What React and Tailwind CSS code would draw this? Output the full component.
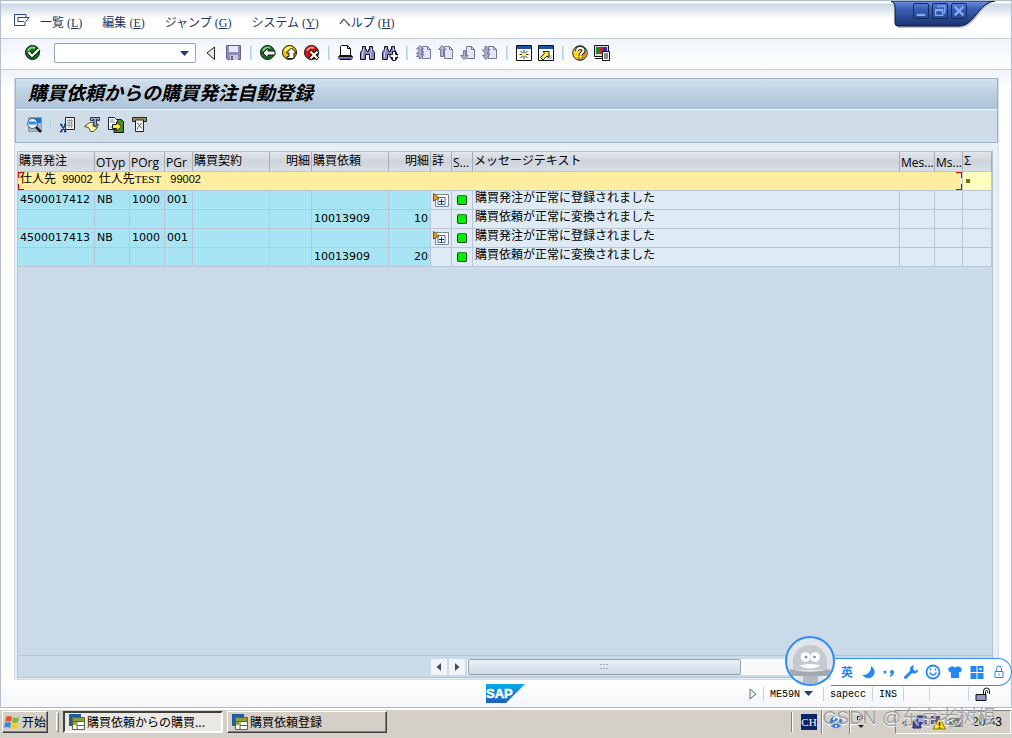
import React, { useState } from 'react';

const menus = [
  { label: '一覧', hot: 'L' },
  { label: '編集', hot: 'E' },
  { label: 'ジャンプ', hot: 'G' },
  { label: 'システム', hot: 'Y' },
  { label: 'ヘルプ', hot: 'H' },
];

const columns = [
  { label: '購買発注', width: 'w-[77px]' },
  { label: 'OTyp', width: 'w-[35px]', latin: true },
  { label: 'POrg', width: 'w-[35px]', latin: true },
  { label: 'PGr', width: 'w-[28px]', latin: true },
  { label: '購買契約', width: 'w-[77px]' },
  { label: '明細', width: 'w-[42px]', right: true },
  { label: '購買依頼', width: 'w-[77px]' },
  { label: '明細', width: 'w-[42px]', right: true },
  { label: '詳', width: 'w-[21px]' },
  { label: 'S...', width: 'w-[21px]', latin: true },
  { label: 'メッセージテキスト', width: '' },
  { label: 'Mes...', width: 'w-[35px]', latin: true },
  { label: 'Ms...', width: 'w-[28px]', latin: true },
  { label: 'Σ', width: 'w-[29px]' },
];

const rows = [
  { po: '4500017412', type: 'NB', org: '1000', grp: '001', req: '', item: '', text: '購買発注が正常に登録されました' },
  { po: '', type: '', org: '', grp: '', req: '10013909', item: '10', text: '購買依頼が正常に変換されました' },
  { po: '4500017413', type: 'NB', org: '1000', grp: '001', req: '', item: '', text: '購買発注が正常に登録されました' },
  { po: '', type: '', org: '', grp: '', req: '10013909', item: '20', text: '購買依頼が正常に変換されました' },
];

const Svg = ({ children, className = 'w-4 h-4' }) => (
  <svg viewBox="0 0 16 16" className={className + ' block shrink-0'} fill="none" aria-hidden="true">{children}</svg>
);

const Ball = ({ fill, shine, children }) => (
  <Svg>
    <circle cx="7.5" cy="7.5" r="7" fill={fill} stroke="#111" />
    <path d="M3 6a5 5 0 0 1 7-3" stroke={shine} strokeWidth="2" />
    {children}
  </Svg>
);

const Page = ({ children }) => (
  <Svg>
    <path d="M6.500 1.500h5l3 3v9h-8z" fill="#e4e4fa" stroke="#77779a" />
    <path d="M11.500 1.500v3h3" stroke="#77779a" />
    {children}
  </Svg>
);

const Binoculars = ({ children }) => (
  <Svg>
    <path d="M2.500 1.500h3v3h1v2h2v-2h1v-3h3v3l2 3v7h-5v-5h-4v5h-5v-7l2-3z" fill="#8688c4" stroke="#14142c" />
    <path d="M3.500 3v3l-1 2v5M11.500 3v3l-1 2v5" stroke="#c9caee" />
    {children}
  </Svg>
);

const icons = {
  ok: <Ball fill="#0c7a1c" shine="#7fd67f"><path d="M3.500 7l3.500 4 7-7" stroke="#111" strokeWidth="4" /><path d="M3.500 7l3.500 4 7-7" stroke="#fff" strokeWidth="2.200" /></Ball>,
  tri: <Svg><path d="M10.500 2v12.500L3 8z" fill="#e4e6e8" stroke="#222" /></Svg>,
  save: <Svg><path d="M.5.5h14v14h-13l-1-1z" fill="#8e8ebc" stroke="#63638c" /><path d="M3 1h9v6H3z" fill="#e8e8fc" /><path d="M4 10h8v5H4z" fill="#c8c8e0" /><path d="M5 11h2v4H5z" fill="#63638c" /></Svg>,
  back: <Ball fill="#0c7a1c" shine="#7fd67f"><path d="M3 8l5-5v3h7v4H8v3z" fill="#fff" stroke="#111" /></Ball>,
  up: <Ball fill="#f5c400" shine="#fff58a"><path d="M9.500 3l5 5h-2.500v5.500h-7v-2H7V8H4.500z" fill="#fff" stroke="#111" /></Ball>,
  cancel: <Ball fill="#cf1212" shine="#ff8a8a"><path d="M6 6l8 8m0-8l-8 8" stroke="#111" strokeWidth="4" /><path d="M6.500 6.500l7 7m0-7l-7 7" stroke="#fff" strokeWidth="2" /></Ball>,
  print: <Svg><path d="M2.500 10.500v-9l1-1h6l3 3v7" fill="#fff" stroke="#111" /><path d="M9.500 1v2.500h3" stroke="#111" /><path d="M1.500 10.500h12l1 1h-14z" fill="#fff" stroke="#111" /><path d="M1 12.500h13" stroke="#7b7fc0" /><path d="M.5 11.500v2h14v-2" stroke="#5b5f9c" /><path d="M1.500 14.500h12" stroke="#111" /></Svg>,
  find: <Binoculars />,
  findNext: <Binoculars><path d="M10.500 6.500h3v3h2.500v3h-2.500v3h-3v-3H8v-3h2.500z" fill="#fff" stroke="#14142c" /></Binoculars>,
  first: <Page><path d="M4 .5l3.500 3.500H5.500v3H8L4.500 9.500H8l-3 3v1H3v-2H.5L3 8.500H.5L3 6V4H.5z" fill="#b2b2d4" stroke="#77779a" /></Page>,
  prev: <Page><path d="M4 .5l4 4H5.500v7h-3v-7H.5z" fill="#b2b2d4" stroke="#77779a" /></Page>,
  next: <Page><path d="M4 14.500l4-4H5.500v-5h-2v5H.5z" fill="#b2b2d4" stroke="#77779a" /></Page>,
  last: <Page><path d="M3 1.500h2v3h3L5.500 7v2H8l-4 5.500-3.500-4H3V8L.5 5H3z" fill="#b2b2d4" stroke="#77779a" /></Page>,
  session: <Svg><path d="M.5.5h15v15H.5z" fill="#fff" stroke="#111" /><path d="M1 1h14v3H1z" fill="#1c50a4" /><path d="M8 5v9M3.500 9.500h9M4.500 6l7 7m0-7l-7 7" stroke="#333" /><path d="M6 8h4v3H6z" fill="#ffe94a" /></Svg>,
  shortcut: <Svg><path d="M.5.5h15v15H.5z" fill="#fff" stroke="#111" /><path d="M1 1h14v3H1z" fill="#1c50a4" /><path d="M9 10h5v4H9z" fill="#c9ced8" /><path d="M2.500 12.500l4-4-1.500-2h6v6l-2-1.500-4 4z" fill="#ffe94a" stroke="#222" /></Svg>,
  help: <Svg><circle cx="8" cy="8" r="7.300" fill="#ffd51f" stroke="#222" /><path d="M8 1a7 7 0 0 1 3 13z" fill="#f08a18" /><path d="M5 6c0-4 6.500-4 6.500-.5C11.500 8 8.500 8 8.500 10.500M8.500 12v2.500" stroke="#222" strokeWidth="4" /><path d="M5 6c0-4 6.500-4 6.500-.5C11.500 8 8.500 8 8.500 10.500M8.500 12v2" stroke="#fff" strokeWidth="2" /></Svg>,
  monitor: <Svg><path d="M.5.5h14v11H.5z" fill="#ddd" stroke="#111" /><path d="M2 2h4v7H2z" fill="#138a2c" /><path d="M6 2h3v7H6z" fill="#d81a1a" /><path d="M9 2h4v7H9z" fill="#2430d0" /><path d="M1 13.500h7" stroke="#111" /><path d="M8.500 6.500h7v9h-7z" fill="#fff" stroke="#111" /><path d="M10 9h4M10 11h4M10 13h4" stroke="#111" /></Svg>,
  detail: <Svg><path d="M2.500.5h13v14h-13z" fill="#a9b7c8" stroke="#8b99aa" /><path d="M6 1h9v5H6z" fill="#1676cf" /><circle cx="6.500" cy="6.500" r="5" fill="#e4f2fd" stroke="#4a5c74" /><path d="M2.500 4.500h8v3h-8z" fill="#2f8de0" /><path d="M10 10l5 5" stroke="#222" strokeWidth="2.500" /></Svg>,
  excel: <Svg><path d="M5.500.5h9v12h-9z" fill="#f3f3f3" stroke="#222" /><path d="M7 3.500h6M7 6h6M7 8.500h6M9 2v9M11.500 2v9" stroke="#999" /><path d="M0 7.500h2.500M4 7.500h2.500M0 14.500h2.500M4 14.500h2.500M1 8l4.500 6M5.500 8L1 14" stroke="#173f78" strokeWidth="1.300" /></Svg>,
  layout: <Svg><path d="M.5 9.500l5-4h4l1 4 3 1-4 4h-3l-2-4z" fill="#fff3ae" stroke="#5c4a17" /><path d="M6.500.5h9v3h-2v-1h-1v5h1.500v1.500h-5V7.500h1v-5h-1v1h-2.500z" fill="#89b4e8" stroke="#111" strokeWidth=".8" /></Svg>,
  exportTo: <Svg><path d="M6 2.500h7l2.500 2v11H6z" fill="#4c8d2e" stroke="#111" /><path d="M.5.5h6l3 3v9h-9z" fill="#fff" stroke="#222" /><path d="M2 3h4M2 5h5M2 10h3" stroke="#6d87b8" /><path d="M4.500 7.500h4v-2.500l5 4.500-5 4.500v-2.500h-4z" fill="#ffee2e" stroke="#222" /></Svg>,
  filter: <Svg><path d="M.5.5h14v4H.5z" fill="#a78b57" stroke="#222" /><path d="M3.500 3v11.500h8V3z" fill="#fff" stroke="#222" /><path d="M5 5.500l5 6M10 5.500l-4 5-1 2" stroke="#555" /></Svg>,
};

const ToolButton = ({ icon, label }) => (
  <button type="button" aria-label={label} className="shrink-0">{icons[icon]}</button>
);

const Sep = ({ className = 'mx-0.5' }) => (
  <span className={'w-0.5 h-3.5 shrink-0 bg-[#b9cfe3] border-r border-[#d3e1ee] ' + className} />
);

function WindowControls() {
  return (
    <div className="absolute top-0 right-3.5 w-[106px] h-7">
      <svg viewBox="0 0 106 28" className="absolute inset-0 w-full h-full" aria-hidden="true">
        <defs>
          <linearGradient id="tab" x1="0" y1="0" x2="0" y2="1">
            <stop offset="0" stopColor="#6d92e4" />
            <stop offset=".3" stopColor="#3b62b8" />
            <stop offset="1" stopColor="#1b3270" />
          </linearGradient>
        </defs>
        <path d="M0 0Q5 1 5 6v17q0 4 4 4h60c12 0 18-15 26-22q5-4 10-5z" fill="#8c93a3" opacity=".6" />
        <path d="M0 0Q4 1 4 6v16q0 3 3 3h61c12 0 18-15 26-21q5-4 10-4z" fill="url(#tab)" stroke="#0c1430" />
      </svg>
      <div className="relative flex gap-[3px] pl-[22px] pt-[2px]">
        <button type="button" aria-label="最小化" className="w-4 h-4 border border-[#14295e] rounded-xs">
          <Svg className="w-3.5 h-3.5"><path d="M3 12.500h10" stroke="#86aaf8" strokeWidth="2.500" /></Svg>
        </button>
        <button type="button" aria-label="元に戻す" className="w-4 h-4 border border-[#14295e] rounded-xs">
          <Svg className="w-3.5 h-3.5"><path d="M6 4V2.500h7.500V10H12M3 6.500h8V13H3zM3 7.500h8" stroke="#86aaf8" strokeWidth="1.500" /></Svg>
        </button>
        <button type="button" aria-label="閉じる" className="w-4 h-4 border border-[#14295e] rounded-xs">
          <Svg className="w-3.5 h-3.5"><path d="M3 3l10 10M13 3L3 13" stroke="#86aaf8" strokeWidth="2.500" /></Svg>
        </button>
      </div>
    </div>
  );
}

function MenuBar() {
  return (
    <header className="relative h-[39px] border-t border-b border-t-[#aebccd] border-b-[#c2cad6] bg-[linear-gradient(to_bottom,#ffffff_2px,#cbd7e5_3px,#ffffff_18px)]">
      <nav className="flex items-center gap-5 h-full pl-[13px] pt-1.5 text-xs text-[#1c3464]">
        <svg viewBox="0 0 16 12" className="w-4 h-3 -mr-2.5 mb-1.5" fill="none" stroke="#28457c" aria-hidden="true">
          <path d="M12 3V.5H.5v11H11V8M4 3.500h7.500M4 7.500h6M4 3v5M11 3.500h4L11.500 8" />
        </svg>
        {menus.map((m) => (
          <button type="button" key={m.hot} className="leading-4 whitespace-nowrap">
            {m.label}<span className="font-['Liberation_Serif',serif]"> (<u>{m.hot}</u>)</span>
          </button>
        ))}
      </nav>
      <WindowControls />
    </header>
  );
}

function MainToolbar() {
  const [command, setCommand] = useState('');
  return (
    <div className="flex items-center gap-1.5 h-[31px] pl-6 pb-0.5 border-b border-[#c9ced8] bg-linear-to-b from-[#f0f4f9] to-white">
      <ToolButton icon="ok" label="確定" />
      <div className="flex items-center w-[142px] h-5 ml-[7px] mr-0.5 border border-[#9aa2aa] rounded-xs bg-white">
        <input aria-label="コマンド" value={command} onChange={(e) => setCommand(e.target.value)} className="min-w-0 flex-1 px-1 text-xs outline-none" />
        <button type="button" aria-label="履歴" className="px-1.5">
          <svg viewBox="0 0 9 5" className="w-[9px] h-[5px]" aria-hidden="true"><path d="M0 0h9L4.500 5z" fill="#1f3c74" /></svg>
        </button>
      </div>
      <ToolButton icon="tri" label="隠す" />
      <ToolButton icon="save" label="保存" />
      <Sep />
      <ToolButton icon="back" label="戻る" />
      <ToolButton icon="up" label="終了" />
      <ToolButton icon="cancel" label="中止" />
      <Sep />
      <ToolButton icon="print" label="印刷" />
      <ToolButton icon="find" label="検索" />
      <ToolButton icon="findNext" label="次を検索" />
      <Sep />
      <ToolButton icon="first" label="先頭ページ" />
      <ToolButton icon="prev" label="前ページ" />
      <ToolButton icon="next" label="次ページ" />
      <ToolButton icon="last" label="最終ページ" />
      <Sep />
      <ToolButton icon="session" label="新規セッション" />
      <ToolButton icon="shortcut" label="ショートカット" />
      <Sep />
      <ToolButton icon="help" label="ヘルプ" />
      <ToolButton icon="monitor" label="レイアウト" />
    </div>
  );
}

const Lamp = () => (
  <span className="block w-2.5 h-2.5 mx-auto rounded-xs bg-[#00f000] border border-[#123c12] border-t-[#2f7d2f]" />
);

const Expand = () => (
  <button type="button" aria-label="詳細" className="block mx-auto">
    <svg viewBox="0 0 16 15" className="w-4 h-[15px]" fill="none" aria-hidden="true">
      <path d="M2.500 1.500h13v12h-13z" fill="#fff" stroke="#7f858d" />
      <path d="M5 4.500h7v7H5z" stroke="#3868b8" />
      <path d="M8.500 6v5M6 8.500h5" stroke="#1c1ca4" />
      <path d="M.5.5L6 5 .5 8z" fill="#f59a14" stroke="#4c3c14" strokeWidth=".8" />
    </svg>
  </button>
);

const keyCell = 'border-r border-b border-[#bac6d6] bg-[#a7e5f4] px-0.5 pt-0 pb-px';
const plainCell = 'border-r border-b border-[#bac6d6] bg-[#deebf5] px-0.5 py-0';

function ResultTable() {
  return (
    <table className="w-full table-fixed border-separate border-spacing-0 text-xs">
      <thead>
        <tr className="h-5">
          {columns.map((c, i) => (
            <th
              key={i}
              className={`${c.width} ${c.right ? 'text-right' : 'text-left'} h-5 overflow-hidden whitespace-nowrap px-px py-0 font-normal leading-4 border-r border-b border-r-[#a4aebb] border-b-[#bac6d6] bg-linear-to-b from-[#e3e7eb] via-[#cfd3db] to-[#d8e0e6] ${c.latin ? "align-bottom font-['Open_Sans',sans-serif]" : 'align-top'}`}
            >
              {c.label}
            </th>
          ))}
        </tr>
      </thead>
      <tbody>
        <tr className="h-[19px]">
          <td colSpan={13} className="relative h-[19px] bg-[#ffeea0] border-b border-r border-[#bac6d6] px-0.5 py-0 align-top leading-3 whitespace-pre">
            仕人先<span className="font-['Liberation_Sans',sans-serif] text-[11px]">  99002  </span>仕人先<span className="font-['Liberation_Serif',serif] text-[11px]">TEST</span><span className="font-['Liberation_Sans',sans-serif] text-[11px]">   99002</span>
            <i className="absolute left-0 top-0 w-1.5 h-1.5 border-l border-t border-[#e00000]" />
            <i className="absolute left-0 bottom-0 w-1.5 h-1.5 border-l border-b border-[#e00000]" />
            <i className="absolute right-0 top-0 w-1.5 h-1.5 border-r border-t border-[#e00000]" />
            <i className="absolute right-0 bottom-0 w-1.5 h-1.5 border-r border-b border-[#e00000]" />
          </td>
          <td className="bg-[#ffffc0] border-b border-r border-[#bac6d6] py-0 px-[3px]"><span className="block w-1 h-1 bg-[#7d7200]" /></td>
        </tr>
        {rows.map((r, i) => (
          <tr key={i} className="h-[19px] leading-4 font-['DejaVu_Sans',sans-serif] text-[11px]">
            <td className={keyCell}>{r.po}</td>
            <td className={keyCell}>{r.type}</td>
            <td className={keyCell}>{r.org}</td>
            <td className={keyCell}>{r.grp}</td>
            <td className={keyCell} />
            <td className={keyCell} />
            <td className={keyCell}>{r.req}</td>
            <td className={keyCell + ' text-right'}>{r.item}</td>
            <td className={plainCell}>{r.po && <Expand />}</td>
            <td className={plainCell}><Lamp /></td>
            <td className={plainCell + " align-top text-xs leading-3 font-['Noto_Sans_CJK_JP',sans-serif]"}>{r.text}</td>
            <td className={plainCell} />
            <td className={plainCell} />
            <td className={plainCell} />
          </tr>
        ))}
      </tbody>
    </table>
  );
}

function ScrollBar() {
  return (
    <div className="flex items-center h-[22px] border-t border-[#b5c5d5]">
      <div className="w-[42.4%]" />
      <button type="button" aria-label="左へ" className="w-4 h-4 mr-0.5 bg-[#f1f5f9]"><Svg><path d="M10 4v8L5.500 8z" fill="#3c5264" /></Svg></button>
      <button type="button" aria-label="右へ" className="w-4 h-4 mr-0.5 bg-[#f1f5f9]"><Svg><path d="M6 4v8l4.500-4z" fill="#3c5264" /></Svg></button>
      <div className="flex-1 h-4 bg-[#f8fafc]">
        <div className="w-[52%] h-4 mx-px flex items-center justify-center rounded-xs border border-[#96a4b0] bg-linear-to-b from-[#eaf1f7] to-[#cddae6]">
          <svg viewBox="0 0 9 5" className="w-[9px] h-[5px]" fill="#9dabb8" aria-hidden="true">
            <path d="M0 0h2v1H0zM3 0h2v1H3zM6 0h2v1H6zM0 4h2v1H0zM3 4h2v1H3zM6 4h2v1H6z" />
          </svg>
        </div>
      </div>
    </div>
  );
}

function StatusBar() {
  return (
    <footer className="grid grid-cols-[1fr_auto_1fr] items-center h-7 border-b border-[#aeb8c5] bg-linear-to-b from-white to-[#f4f6f9]">
      <span />
      <svg viewBox="0 0 40 20" className="w-10 h-5" role="img" aria-label="SAP">
        <defs>
          <linearGradient id="sap" x1="0" y1="0" x2="0" y2="1">
            <stop offset="0" stopColor="#06aeea" />
            <stop offset="1" stopColor="#1d5fbe" />
          </linearGradient>
        </defs>
        <path d="M0 0h39L20 19H0z" fill="url(#sap)" />
        <text x="0" y="14" fontSize="13" fontWeight="bold" fill="#fff" stroke="#fff" strokeWidth=".4" fontFamily="Liberation Sans">SAP</text>
      </svg>
      <div className="flex items-center justify-end h-full pr-5 text-[10px] font-medium font-['Liberation_Mono',monospace]">
        <svg viewBox="0 0 8 12" className="w-2 h-3 mr-1.5" aria-hidden="true"><path d="M1 1v10l6-5z" fill="#eef3f8" stroke="#4f6c86" /></svg>
        <span className="h-3.5 border-l border-[#ccd2da] pl-1.5">ME59N</span>
        <svg viewBox="0 0 9 5" className="w-[9px] h-[5px] mx-1" aria-hidden="true"><path d="M0 0h9L4.500 5z" fill="#26406c" /></svg>
        <span className="h-3.5 border-l border-[#ccd2da] ml-1.5 px-1.5">sapecc</span>
        <span className="w-[31px] h-3.5 border-l border-[#ccd2da] pl-1.5">INS</span>
        <span className="w-[26px] h-3.5 border-l border-[#ccd2da]" />
        <span className="w-[39px] h-3.5 border-l border-[#ccd2da]" />
        <span className="h-3.5 border-l border-[#ccd2da] pl-1.5" />
        <Svg><path d="M1 8.500h10v6H1z" fill="#9296c8" stroke="#111" /><path d="M8.500 8V5a3 3 0 0 1 6 0v3M10.500 8V5.500a1 1 0 0 1 2 0V7" stroke="#111" /></Svg>
      </div>
    </footer>
  );
}

function InputBar() {
  return (
    <div className="absolute right-0 bottom-[52px] flex items-end">
      <svg viewBox="0 0 50 50" className="relative z-10 w-[50px] h-[50px] -mr-1" aria-hidden="true">
        <defs><clipPath id="face"><circle cx="25" cy="25" r="23" /></clipPath></defs>
        <circle cx="25" cy="25" r="24" fill="#e1e4e8" stroke="#2f8df5" strokeWidth="2" />
        <g clipPath="url(#face)">
          <path d="M8 34V26a17 17 0 0 1 34 0v8z" fill="#c5cad1" />
          <path d="M5 33q20 6 40 0v7H5z" fill="#a3a9b2" />
          <path d="M18 40h15v10H18z" fill="#b5bac2" />
          <path d="M6 40h6v6zM37 40h6v6z" fill="#fff" />
        </g>
        <circle cx="20.500" cy="21" r="4.800" fill="#fff" />
        <circle cx="30" cy="21" r="4.800" fill="#fff" />
        <circle cx="21" cy="21" r="1.500" fill="#8b919a" />
        <path d="M28 20l3 1-3 1" stroke="#8b919a" fill="none" />
        <path d="M14 29.500q11-3 22 0-11 6-22 0z" fill="#fff" />
      </svg>
      <div className="flex items-center gap-1.5 h-7 pl-2.5 pr-1 rounded-r-full border border-l-0 border-[#2f8df5] bg-white text-[#2288f8]">
        <span className="text-xs font-bold leading-none">英</span>
        <Svg><path d="M10 2a6.500 6.500 0 1 1-8.500 9A8 8 0 0 0 10 2z" fill="currentColor" transform="translate(2 0)" /></Svg>
        <Svg><circle cx="4" cy="8" r="1.500" fill="currentColor" /><circle cx="11" cy="8" r="2" fill="currentColor" /><path d="M12 8q0 3-3 4" stroke="currentColor" strokeWidth="1.500" /></Svg>
        <Svg><path d="M2.500 13.500l7-7" stroke="currentColor" strokeWidth="3" strokeLinecap="round" /><path d="M11 1.500a4 4 0 1 0 4 4l-3 1.500-2-2z" fill="currentColor" /></Svg>
        <Svg><circle cx="8" cy="8" r="6.500" stroke="currentColor" strokeWidth="1.800" /><path d="M4.500 8.500q3.500 5 7 0" stroke="currentColor" strokeWidth="1.500" /><path d="M5.500 4.500v2M10.500 4.500v2" stroke="currentColor" strokeWidth="1.500" /></Svg>
        <Svg><path d="M5 2q3 2.500 6 0l4 2.500-1.500 4-1.500-.5v6H4v-6l-1.500.5L1 4.500z" fill="currentColor" /></Svg>
        <Svg><path d="M1.500 2h6v6h-6zM1.500 9h6v6h-6zM8.500 9h6v6h-6z" fill="currentColor" /><path d="M9.500 3h4v4h-4z" stroke="currentColor" strokeWidth="2" /></Svg>
        <Svg><path d="M4 7.500h8v6H4zM5.500 7V4.500a2.500 2.500 0 0 1 5 0V7M8 9.500v2" stroke="currentColor" /></Svg>
      </div>
    </div>
  );
}

const TaskIcon = () => (
  <Svg>
    <path d="M0 0h12v3H3v9H0z" fill="#1f5d9e" />
    <path d="M3.500 3.500h12v12h-12z" fill="#fff" stroke="#5c6c1c" />
    <path d="M4 4h11v3H4zM4 7h3v4H4z" fill="#8da03a" />
    <path d="M4 7.500h11M8 8v7M8 11.500h7" stroke="#5c6c1c" />
  </Svg>
);

function TaskBar() {
  return (
    <div className="relative flex items-center h-[30px] pb-1 pl-0.5 pr-px border-t-2 border-white bg-[#d4d0c8] text-xs font-['Noto_Sans_CJK_JP',sans-serif]">
      <button type="button" className="flex items-center gap-0.5 h-[22px] px-px border border-t-white border-l-white border-r-[#404040] border-b-[#404040] shadow-[inset_-1px_-1px_0_#808080] leading-4 whitespace-nowrap">
        <Svg><path d="M2 3q3-2 6 0L7 8Q4 6 1 8z" fill="#e8542a" /><path d="M9 3q3 2 6 0l-1 5q-3 2-6 0z" fill="#7dbb32" /><path d="M1 9q3-2 6 0l-1 5q-3-2-6 0z" fill="#3b87de" /><path d="M8 9q3 2 6 0l-1 5q-3 2-6 0z" fill="#f6c528" /></Svg>
        <span className="font-['Noto_Sans_CJK_SC',sans-serif]">开始</span>
      </button>
      <span className="w-[3px] h-5 ml-2 border border-l-white border-t-white border-r-[#808080] border-b-[#808080]" />
      <button type="button" className="flex items-center gap-0.5 w-40 h-[22px] ml-1 pl-1 border-2 border-t-[#404040] border-l-[#404040] border-r-white border-b-white bg-[#eae8e3] leading-4 whitespace-nowrap">
        <TaskIcon />購買依頼からの購買...
      </button>
      <button type="button" className="flex items-center gap-0.5 w-40 h-[22px] ml-1 pl-1 border border-t-white border-l-white border-r-[#404040] border-b-[#404040] shadow-[inset_-1px_-1px_0_#808080] leading-4 whitespace-nowrap">
        <TaskIcon />購買依頼登録
      </button>
      <div className="flex items-center ml-auto h-full">
        <span className="w-0.5 h-5 mr-2 border-l border-[#808080] border-r border-r-white" />
        <span className="w-4 h-4 bg-[#0a246a] text-white text-center leading-4 font-['Liberation_Serif',serif] text-[11px]">CH</span>
        <span className="w-0.5 h-6 ml-1 mr-1.5 border-l border-[#808080] border-r border-r-white" />
        <Svg><circle cx="7" cy="8" r="6.500" fill="#3478d8" stroke="#b8d2f4" /><path d="M4.500 6c0-4 6-3.500 5 0-.5 1.500-2.500 1.500-2.500 3.500M7 11v2" stroke="#fff" strokeWidth="1.800" /></Svg>
        <span className="w-0.5 h-6 ml-1 border-l border-[#808080] border-r border-r-white" />
        <Svg className="w-4 h-4 ml-0.5"><path d="M5 11h6l-3 3z" fill="#222" /><path d="M4.500 6V2.500h3M9 1v4M11.500 2.500V6M6 5.500h3" stroke="#222" /></Svg>
        <div className="flex items-center gap-0.5 h-6 ml-[26px] pl-1.5 pr-2 border border-t-[#808080] border-l-[#808080] border-r-white border-b-white">
          <span className="w-2 leading-none">«</span>
          <Svg><path d="M5 2h9v8H5zM1 7h8v7H1z" fill="#4a4c98" stroke="#272858" /><path d="M6 4h6v4H6z" fill="#9ca8ec" /></Svg>
          <Svg><path d="M1 2h9v8H1z" fill="#4a4c98" /><path d="M9 4l6.500 11H3z" fill="#ffdf14" stroke="#8a7400" /><path d="M9.500 8v4M9.500 13v1.500" stroke="#222" strokeWidth="1.500" /></Svg>
          <Svg><path d="M1 4h14v9H1z" fill="#777" /><path d="M3 6l3 5 2-4 2 4 3-5" stroke="#eee" /></Svg>
          <time className="pl-1.5 font-['Liberation_Sans',sans-serif] leading-none">20:43</time>
        </div>
      </div>
      <span className="absolute right-4 -top-1 text-[19px] leading-6 whitespace-nowrap text-[#8d8d8d]/80 font-['Liberation_Sans','Noto_Sans_CJK_SC',sans-serif] pointer-events-none [text-shadow:0_1px_1px_#fff]">CSDN @东京老树根</span>
    </div>
  );
}

export default function App() {
  return (
    <div className="relative flex flex-col min-h-screen bg-white text-black font-['Noto_Sans_CJK_JP',sans-serif]">
      <div className="relative flex flex-col flex-1 border-x border-[#b4c0d0]">
        <MenuBar />
        <MainToolbar />
        <main className="flex flex-col flex-1 pl-[13px] pr-3 pt-2 bg-[linear-gradient(to_bottom,#eff3f8,#ffffff_20px)]">
          <div className="flex flex-col flex-1 border-x border-b border-[#d3dde8] bg-[#e7eff6]">
            <section className="border border-[#9fb1c4] bg-[#cfdde8]">
              <h1 className="h-[31px] pl-3 border-b border-[#eef4f9] bg-linear-to-b from-[#d2e1ef] via-[#bccfdf] to-[#adc3dc] text-[19px] leading-[25px] font-bold italic whitespace-nowrap">
                購買依頼からの購買発注自動登録
              </h1>
              <div className="flex items-center gap-2 h-8 pl-2.5 pb-0.5">
                <ToolButton icon="detail" label="詳細" />
                <Sep className="" />
                <ToolButton icon="excel" label="スプレッドシート" />
                <ToolButton icon="layout" label="レイアウト選択" />
                <ToolButton icon="exportTo" label="ローカルファイル" />
                <ToolButton icon="filter" label="フィルタ" />
              </div>
            </section>
            <section className="flex flex-col flex-1 mt-2 ml-0.5 mr-[5px] mb-px border border-[#b5c3d3] bg-[#cbdae9]">
              <ResultTable />
              <div className="flex-1" />
              <ScrollBar />
            </section>
          </div>
        </main>
        <StatusBar />
      </div>
      <TaskBar />
      <InputBar />
    </div>
  );
}
